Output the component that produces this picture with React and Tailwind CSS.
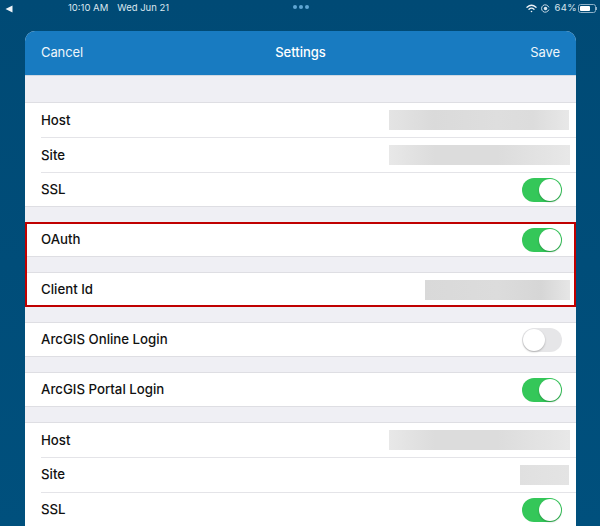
const gradients = {
  a: "bg-[linear-gradient(90deg,#e4e4e4,#dadada_25%,#dedede_60%,#dcdcdc_80%,#e8e8e8)]",
  b: "bg-[linear-gradient(90deg,#d9d9d9,#dcdcdc_50%,#d6d6d6_80%,#e6e6e6)]",
  c: "bg-[linear-gradient(90deg,#e8e8e8,#dcdcdc_25%,#dcdcdc_60%,#e8e8e8)]",
  d: "bg-[linear-gradient(90deg,#e0e0e0,#e4e4e4)]",
};

function Toggle({ on = true }) {
  return (
    <div
      className={`flex h-[24px] w-[40px] rounded-full p-[1px] ${
        on ? "justify-end bg-[#34c759]" : "justify-start bg-[#e6e6e8]"
      }`}
    >
      <div className="h-[22px] w-[22px] rounded-full bg-white shadow-[0_1px_2px_rgba(0,0,0,0.25)]" />
    </div>
  );
}

function Blur({ width, height = 20, tone, inset = 0 }) {
  return <div style={{ width, height, marginRight: inset }} className={gradients[tone]} />;
}

function Row({ label, height = 33, last = true, nudge = false, children }) {
  return (
    <div className="bg-white pl-[16px]">
      <div
        style={{ height }}
        className={`flex items-center justify-between pr-[6px] ${last ? "" : "box-content border-b border-[#e4e4e8]"}`}
      >
        <span className={`text-[13.25px] font-medium text-[#111] ${nudge ? "pt-[2px]" : ""}`}>{label}</span>
        {children}
      </div>
    </div>
  );
}

function Section({ children }) {
  return <div className="border-y border-[#dedee3]">{children}</div>;
}

function ToggleRow({ label, on }) {
  return (
    <Row label={label}>
      <div className="pr-[8px]">
        <Toggle on={on} />
      </div>
    </Row>
  );
}

function StatusBar() {
  return (
    <div className="relative flex h-[16px] items-center justify-between pl-[5px] pr-[3px] pt-[1px] text-[9.5px] text-[#dbe7ef]">
      <div className="flex items-center">
        <svg width="8" height="8" viewBox="0 0 8 8">
          <path d="M7.5 .5v7L.5 4z" fill="#eef4f8" />
        </svg>
        <span className="ml-[55px]">10:10 AM</span>
        <span className="ml-[9px]">Wed Jun 21</span>
      </div>
      <div className="absolute left-[293px] top-[5px] flex gap-[2px]">
        <div className="h-[4px] w-[4px] rounded-full bg-[#5fa6d3]" />
        <div className="h-[4px] w-[4px] rounded-full bg-[#5fa6d3]" />
        <div className="h-[4px] w-[4px] rounded-full bg-[#5fa6d3]" />
      </div>
      <div className="flex items-center">
        <svg width="11" height="9" viewBox="0 0 22 18" fill="none" stroke="#eef4f8" strokeWidth="2.6" strokeLinecap="round">
          <path d="M2 6.5c5.5-5 12.5-5 18 0" />
          <path d="M6 10.5c3-2.6 7-2.6 10 0" />
          <circle cx="11" cy="15" r="1.6" fill="#eef4f8" stroke="none" />
        </svg>
        <svg width="9" height="9" viewBox="0 0 18 18" fill="none" className="ml-[4px]">
          <path d="M15.5 12A7.5 7.5 0 1 1 15.5 6" stroke="#dbe7ef" strokeWidth="1.8" strokeLinecap="round" />
          <circle cx="9" cy="9" r="3.5" fill="#dbe7ef" />
        </svg>
        <span className="ml-[4px] tracking-[0.4px]">64%</span>
        <div className="ml-[1px] flex items-center">
          <div className="h-[9px] w-[18px] rounded-[2.5px] border border-[#8fb2c9] p-[1px]">
            <div className="h-full w-[10px] rounded-[1px] bg-white" />
          </div>
          <div className="h-[3px] w-[1px] bg-[#8fb2c9]" />
        </div>
      </div>
    </div>
  );
}

export default function App() {
  return (
    <div className="h-[526px] w-[600px] overflow-hidden bg-[linear-gradient(180deg,#004a75,#00507d)] font-['Inter',sans-serif]">
      <StatusBar />

      <div className="ml-[25px] mt-[15px] w-[551px] overflow-hidden rounded-t-[10px] bg-[#efeff4]">
        {/* Header */}
        <div className="grid h-[44px] grid-cols-3 items-center bg-[#187bc1] px-[16px] text-[13px] text-[#eef6fb]">
          <span className="tracking-[-0.1px]">Cancel</span>
          <span className="text-center font-medium text-white">Settings</span>
          <span className="text-right tracking-[-0.1px]">Save</span>
        </div>
        <div className="h-[1px] bg-[#cfd8e2]" />

        <div className="h-[26px]" />

        <Section>
          <Row label="Host" height={34} last={false} nudge>
            <Blur width={180} tone="a" inset={1} />
          </Row>
          <Row label="Site" height={34} last={false} nudge>
            <Blur width={181} tone="c" />
          </Row>
          <ToggleRow label="SSL" />
        </Section>

        <div className="h-[15px]" />

        {/* Highlighted block */}
        <div className="relative">
          <Section>
            <ToggleRow label="OAuth" />
          </Section>
          <div className="h-[15px]" />
          <Section>
            <Row label="Client Id">
              <Blur width={145} tone="b" />
            </Row>
          </Section>
          <div className="absolute inset-0 border-2 border-[#c00000]" />
        </div>

        <div className="h-[15px]" />

        <Section>
          <ToggleRow label="ArcGIS Online Login" on={false} />
        </Section>

        <div className="h-[15px]" />

        <Section>
          <ToggleRow label="ArcGIS Portal Login" />
        </Section>

        <div className="h-[15px]" />

        <Section>
          <Row label="Host" height={34} last={false} nudge>
            <Blur width={181} tone="c" />
          </Row>
          <Row label="Site" height={34} last={false}>
            <Blur width={49} tone="d" inset={1} />
          </Row>
          <ToggleRow label="SSL" />
        </Section>
      </div>
    </div>
  );
}
